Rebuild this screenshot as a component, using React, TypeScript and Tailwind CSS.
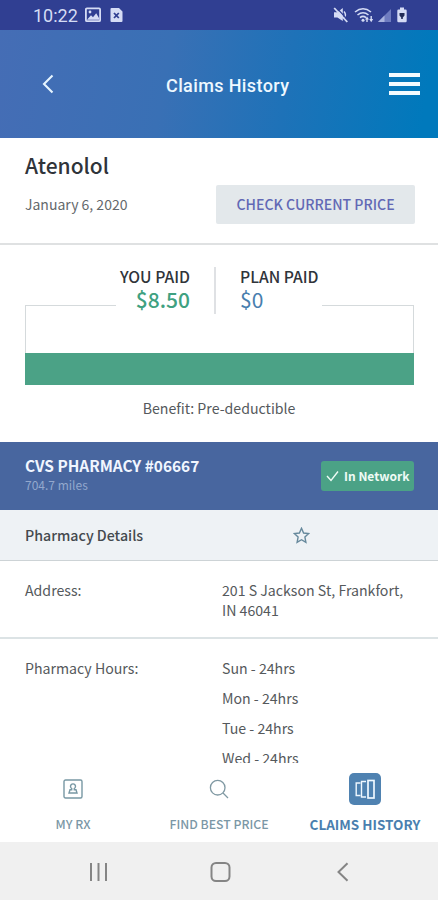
import type { ReactNode } from 'react';

const hours = ['Sun - 24hrs', 'Mon - 24hrs', 'Tue - 24hrs', 'Wed - 24hrs'];

const StatusBar = () => {
  return (
    <div className="flex h-[30px] shrink-0 items-center bg-[#303f92] pl-[33px] pr-[30px] text-[#d5dcf5]">
      <span className="w-[46px] whitespace-nowrap font-[Roboto] text-[18px] leading-[30px] pt-px">10:22</span>
      <svg className="ml-[6px]" width="16" height="16" viewBox="0 0 16 16">
        <rect x="0.9" y="1.4" width="14.2" height="12.8" rx="1" fill="none" stroke="currentColor" strokeWidth="1.8" />
        <path d="M2 12.8 6 8.2l2 2 3.2-4L14 11v1.8z" fill="currentColor" />
        <circle cx="5" cy="5" r="1.4" fill="currentColor" />
      </svg>
      <svg className="ml-[9px]" width="13" height="16" viewBox="0 0 13 16">
        <path d="M1.5 1H9l3.5 3.5V14a1 1 0 0 1-1 1h-10a1 1 0 0 1-1-1V2a1 1 0 0 1 1-1z" fill="currentColor" />
        <path d="m4 6 4.8 5M8.8 6 4 11" stroke="#303f92" strokeWidth="1.8" />
      </svg>
      <div className="ml-auto flex items-center">
        <svg width="16" height="16" viewBox="0 0 16 16">
          <path d="M1 5.3h3.4L9.8 1v13L4.4 10.5H1z" fill="currentColor" />
          <path d="M11 4.500q2.500 3 .6 6" stroke="currentColor" strokeWidth="1.5" fill="none" />
          <path d="M2.8 0 15.8 14" stroke="#303f92" strokeWidth="1.2" />
          <path d="M1.2 1 14.3 15" stroke="currentColor" strokeWidth="1.8" />
        </svg>
        <svg className="ml-[5px]" width="20" height="16" viewBox="0 0 20 16">
          <g fill="none" stroke="currentColor" strokeWidth="1.6">
            <path d="M1 5q8-6.5 16 0" />
            <path d="M3.5 8q5.5-4.5 11 0" />
            <path d="M6 10.6q3-2.4 6 0" />
          </g>
          <circle cx="9" cy="13.2" r="1.5" fill="currentColor" />
          <path d="m11 12.5 2-3 2 3zM15.2 12l2 3.2 2-3.2zM12.3 12h1.4v3h-1.400zM16.500 9h1.400v3h-1.400z" fill="currentColor" />
        </svg>
        <svg className="ml-[4px]" width="13" height="16" viewBox="0 0 13 16">
          <path d="M0 15 13 2v13z" fill="#6e7cc0" />
          <path d="M0 15 6.500 8.500V15z" fill="#a9b4df" />
        </svg>
        <svg className="ml-[5px]" width="12" height="16" viewBox="0 0 12 16">
          <path d="M4 .5h4v2h1.500a1.200 1.200 0 0 1 1.200 1.200V14a1.200 1.200 0 0 1-1.200 1.200h-7A1.200 1.200 0 0 1 1.300 14V3.700a1.200 1.200 0 0 1 1.200-1.200H4z" fill="currentColor" />
          <path d="M3.500 6h5v2.500L6.800 10.500v1.500H5.200v-1.500L3.500 8.500z" fill="#222c56" />
        </svg>
      </div>
    </div>
  );
};

const Header = () => {
  return (
    <header className="grid h-[108px] shrink-0 grid-cols-[100px_1fr_100px] items-center bg-[linear-gradient(100deg,#456db5_0%,#3970b5_38%,#1e72b8_65%,#0079bc_96%)]">
      <svg className="ml-[42px]" width="12" height="20" viewBox="0 0 12 20">
        <path d="M10.5 1.5 2 10l8.500 8.500" fill="none" stroke="#e6f5ff" strokeWidth="2.1" />
      </svg>
      <h1 className="whitespace-nowrap pl-[66px] pt-[3px] font-[Roboto] text-[18px] font-medium leading-6 tracking-[0.38px] text-[#eef8ff]">
        Claims History
      </h1>
      <div className="ml-[51px] flex w-[31px] flex-col gap-[5px]">
        <span className="h-1 bg-[#f4fbff]" />
        <span className="h-1 bg-[#f4fbff]" />
        <span className="h-1 bg-[#f4fbff]" />
      </div>
    </header>
  );
};

const PaymentSummary = () => {
  return (
    <section className="h-[197px] px-[25px] pt-[22px]">
      {/* Amounts sit over the top edge of the chart frame */}
      <div className="relative z-10 -mb-[9px] ml-[91px] flex h-[47px] w-[206px] bg-white">
        <div className="-mt-px flex w-[74px] flex-col items-end">
          <div className="whitespace-nowrap text-[15.700px] font-medium leading-[22px] text-[#30343a]">YOU PAID</div>
          <div className="text-[21px] font-medium leading-[22px] text-[#3fa181]">$8.50</div>
        </div>
        <div className="ml-[24px] w-[2px] bg-[#dfe1e4]" />
        <div className="-mt-px ml-[24px]">
          <div className="whitespace-nowrap text-[15.700px] font-medium leading-[22px] text-[#30343a]">PLAN PAID</div>
          <div className="text-[21px] leading-[22px] text-[#487eae]">$0</div>
        </div>
      </div>
      <div className="flex h-[80px] w-[389px] flex-col justify-end border-x border-t border-[#d5dadc]">
        <div className="-mx-px h-[32px] bg-[#4ba286]" />
      </div>
      <p className="mt-[13px] text-center text-[14.150px] leading-5 text-[#55595c]">Benefit: Pre-deductible</p>
    </section>
  );
};

const DetailRow = ({ label, children }: { label: string; children: ReactNode }) => {
  return (
    <div className="flex text-[14.150px] leading-5 text-[#55595c]">
      <div className="w-[197px]">{label}</div>
      <div>{children}</div>
    </div>
  );
};

const TabItem = ({ label, active, children }: { label: string; active?: boolean; children: ReactNode }) => {
  return (
    <div className="flex w-[146px] flex-col items-center">
      <div className="flex h-[34px] items-center">{children}</div>
      <span
        className={
          active
            ? 'mt-[10px] whitespace-nowrap text-[13.500px] font-bold leading-4 text-[#4a7faf]'
            : 'mt-[10px] whitespace-nowrap text-[12.250px] font-medium leading-4 text-[#7b97a6]'
        }
      >
        {label}
      </span>
    </div>
  );
};

const TabBar = () => {
  return (
    <nav className="flex h-[79px] shrink-0 bg-white pt-[9px]">
      <TabItem label="MY RX">
        <svg width="20" height="20" viewBox="0 0 20 20" fill="none" stroke="#7898a4" strokeWidth="1.4">
          <rect x="1" y="1" width="18" height="18" rx="1.5" />
          <path d="M8.700 9.500a2.500 2.500 0 1 1 2.600 0v1.200h1.700l1 3.300H6l1-3.300h1.700z" />
        </svg>
      </TabItem>
      <TabItem label="FIND BEST PRICE">
        <svg width="20" height="20" viewBox="0 0 20 20" fill="none" stroke="#8099a3" strokeWidth="1.3">
          <circle cx="8.7" cy="8.7" r="7.3" />
          <path d="m14 14 5 5" />
        </svg>
      </TabItem>
      <TabItem label="CLAIMS HISTORY" active>
        <svg width="32" height="32" viewBox="0 0 32 32" fill="none" stroke="#eff8ff" strokeWidth="1.4">
          <rect width="32" height="32" rx="5" fill="#4f82b1" stroke="none" />
          <path d="M11.500 10H7.200v12.500h4.300" />
          <path d="M17 8.500h-4.500v15.500H17" />
          <rect x="19" y="7.500" width="6" height="17.500" strokeWidth="1.7" />
        </svg>
      </TabItem>
    </nav>
  );
};

const SystemNav = () => {
  return (
    <div className="flex h-[58px] shrink-0 items-center bg-[#f0f0f0] pb-px pt-[3px]">
      <svg className="ml-[89px]" width="19" height="20" viewBox="0 0 19 20">
        <path d="M2 1v18M9.5 1v18M17 1v18" stroke="#858585" strokeWidth="2" />
      </svg>
      <svg className="ml-[102px]" width="21" height="20" viewBox="0 0 21 20">
        <rect x="1.5" y="1" width="18" height="18" rx="4.5" fill="none" stroke="#858585" strokeWidth="2" />
      </svg>
      <svg className="ml-[105px]" width="13" height="20" viewBox="0 0 13 20">
        <path d="M11.5 1.2 2.5 10l9 8.8" fill="none" stroke="#858585" strokeWidth="2" />
      </svg>
    </div>
  );
};

const App = () => {
  return (
    <div className="flex h-[900px] w-[438px] flex-col overflow-hidden bg-white font-['Noto_Sans_CJK_SC','Noto_Sans',sans-serif]">
      <StatusBar />
      <Header />

      <main className="min-h-0 flex-1 overflow-hidden">
        {/* Drug */}
        <section className="h-[107px] border-b-2 border-[#dfe1e2] pl-[25px] pr-[23px] pt-[12px]">
          <h2 className="text-[21px] font-medium leading-[30px] text-[#30343a]">Atenolol</h2>
          <div className="mt-[5px] flex items-center justify-between">
            <span className="-mt-[2px] text-[14px] leading-5 text-[#65696c]">January 6, 2020</span>
            <button className="h-[39px] w-[199px] whitespace-nowrap rounded-[2px] bg-[#e3e8eb] text-[14.100px] font-medium text-[#6268b5]">
              CHECK CURRENT PRICE
            </button>
          </div>
        </section>

        <PaymentSummary />

        {/* Pharmacy */}
        <section className="flex h-[68px] items-start justify-between bg-[#48669f] pl-[25px] pr-[24px]">
          <div className="pt-[12px]">
            <h3 className="whitespace-nowrap text-[15.400px] font-bold leading-[22px] text-[#f1f6ff]">CVS PHARMACY #06667</h3>
            <p className="text-[12px] leading-[18px] text-[#93a8cd]">704.7 miles</p>
          </div>
          <div className="mt-[19px] flex h-[30px] w-[93px] items-center rounded-[3px] bg-[#4ba286] pl-[5px] text-[#eefbf5]">
            <svg width="13" height="12" viewBox="0 0 13 12">
              <path d="m1 6 4 4.5L12 1.5" fill="none" stroke="currentColor" strokeWidth="1.4" />
            </svg>
            <span className="ml-[5px] whitespace-nowrap text-[12px] font-bold leading-4">In Network</span>
          </div>
        </section>
        <div className="flex h-[51px] items-center border-b border-[#cdd3d6] bg-[#eef2f5] pl-[25px]">
          <h4 className="w-[268px] text-[14.200px] font-medium leading-5 text-[#44494e]">Pharmacy Details</h4>
          <svg width="17" height="17" viewBox="0 0 17 17">
            <path
              d="m8.5 1.3 2.1 4.7 5.1.6-3.8 3.500 1 5.200-4.400-2.600-4.400 2.600 1-5.200-3.800-3.500 5.100-.6z"
              fill="none"
              stroke="#66899c"
              strokeWidth="1.4"
            />
          </svg>
        </div>
        <div className="h-[78px] border-b-2 border-[#dce3e5] pl-[25px] pt-[19px]">
          <DetailRow label="Address:">
            201 S Jackson St, Frankfort,
            <br />
            IN 46041
          </DetailRow>
        </div>
        <div className="pl-[25px] pt-[19px]">
          <DetailRow label="Pharmacy Hours:">
            <div className="flex flex-col gap-[10px]">
              {hours.map((day) => (
                <div key={day}>{day}</div>
              ))}
            </div>
          </DetailRow>
        </div>
      </main>

      <TabBar />
      <SystemNav />
    </div>
  );
};

export default App;
